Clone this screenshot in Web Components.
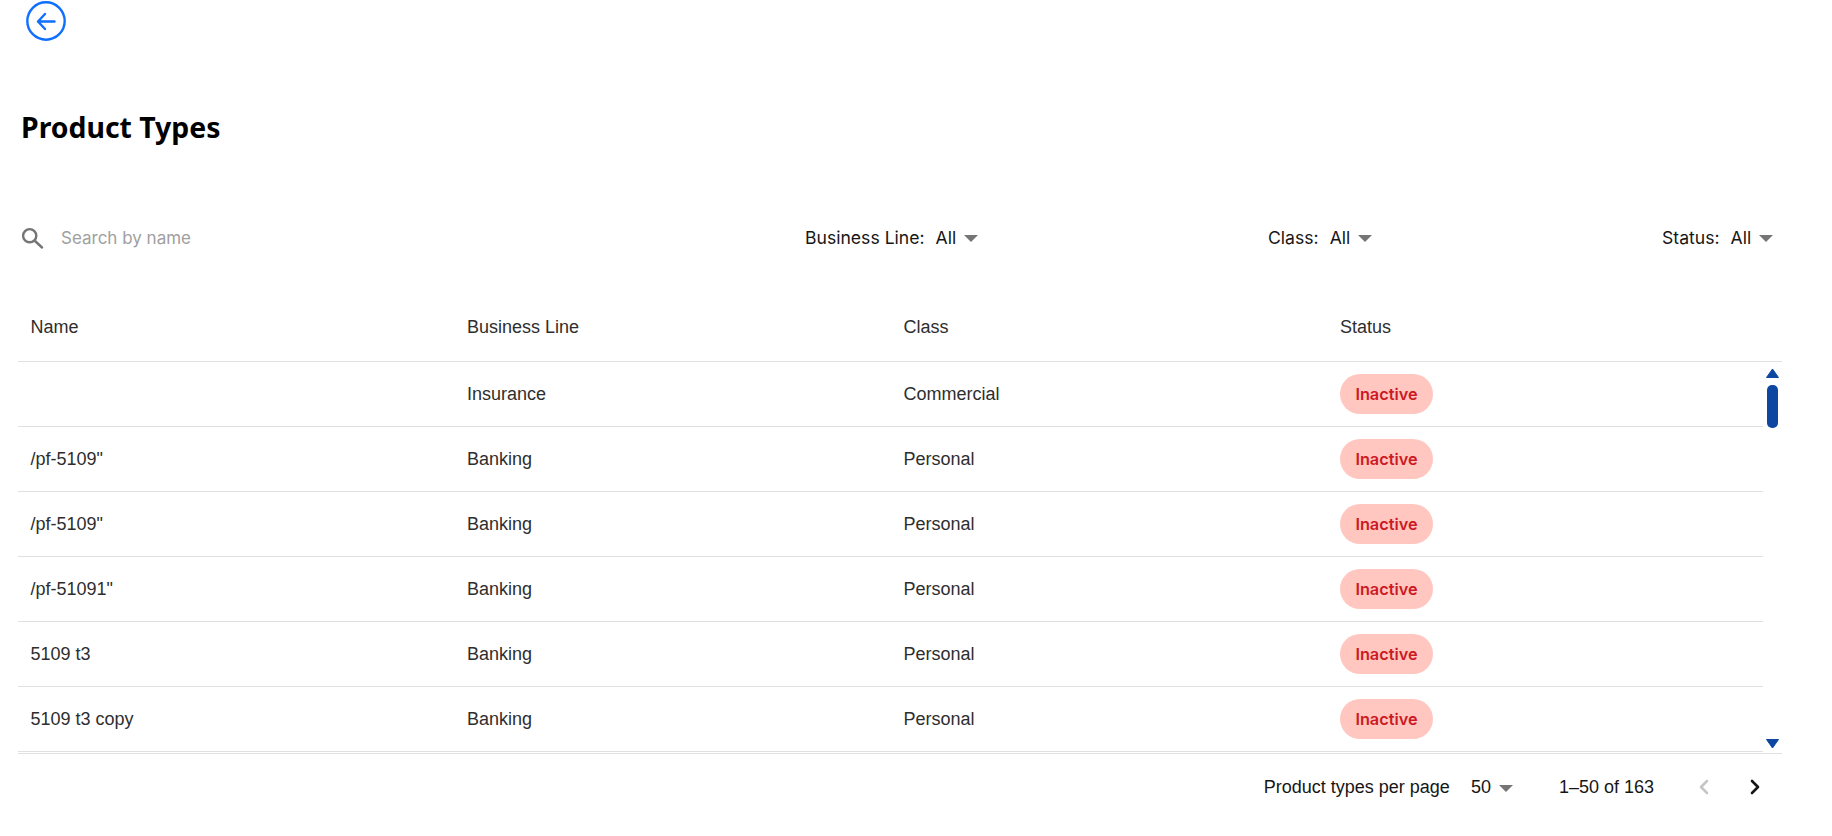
<!DOCTYPE html>
<html>
<head>
<meta charset="utf-8">
<title>Product Types</title>
<style>
  html, body { margin: 0; height: 100%; background: #fff; font-family: "Liberation Sans", sans-serif; }
  body { overflow: hidden; }
</style>
</head>
<body>
<product-types-page></product-types-page>

<script>
/* small select used by the filter bar and the pager */
const selectTemplate = document.createElement('template');
selectTemplate.innerHTML = `
  <style>
    :host { display: inline-flex; align-items: center; white-space: nowrap; }
    .label { margin-right: 11px; }
    .label:empty { display: none; }
    .caret { width: 0; height: 0; margin-left: 8px; margin-top: 2px;
      border-left: 7px solid transparent; border-right: 7px solid transparent; border-top: 7px solid #757575; }
  </style>
  <span class="label"></span><slot></slot><span class="caret"></span>
`;
class SelectBox extends HTMLElement {
  connectedCallback() {
    const root = this.attachShadow({ mode: 'open' });
    root.appendChild(selectTemplate.content.cloneNode(true));
    root.querySelector('.label').textContent = this.getAttribute('label') || '';
  }
}
customElements.define('select-box', SelectBox);

const pillTemplate = document.createElement('template');
pillTemplate.innerHTML = `
  <style>
    :host { display: inline-flex; align-items: center; justify-content: center; width: 93px; height: 40px;
      border-radius: 20px; background: #ffc7c0; color: #cc1a24; font: 600 16.3px Inter, sans-serif; box-sizing: border-box; }
  </style>
  <slot></slot>
`;
class StatusPill extends HTMLElement {
  connectedCallback() {
    this.attachShadow({ mode: 'open' }).appendChild(pillTemplate.content.cloneNode(true));
  }
}
customElements.define('status-pill', StatusPill);

const rowTemplate = document.createElement('template');
rowTemplate.innerHTML = `
  <style>
    :host { display: grid; grid-template-columns: repeat(4, 436.5px); height: 65px; box-sizing: border-box;
      border-bottom: 1px solid #e0e0e0; align-items: center; font: 18px "Liberation Sans", sans-serif; color: #2e2e2e; flex: none; }
    div { padding-left: 12.5px; white-space: nowrap; }
    .pill { display: flex; }
  </style>
  <div class="name"></div><div class="line"></div><div class="cls"></div>
  <div class="pill"><status-pill>Inactive</status-pill></div>
`;
class ProductRow extends HTMLElement {
  connectedCallback() {
    const root = this.attachShadow({ mode: 'open' });
    root.appendChild(rowTemplate.content.cloneNode(true));
    root.querySelector('.name').textContent = this.getAttribute('name') || '';
    root.querySelector('.line').textContent = this.getAttribute('line') || '';
    root.querySelector('.cls').textContent = this.getAttribute('cls') || '';
  }
}
customElements.define('product-row', ProductRow);

const scrollTemplate = document.createElement('template');
scrollTemplate.innerHTML = `
  <style>
    :host { display: flex; flex-direction: column; align-items: center; width: 19px; flex: none; height: 391px; }
    svg { display: block; flex: none; }
    .up { margin-top: 6px; }
    .thumb { width: 11px; height: 43px; margin-top: 7px; border-radius: 5px; background: #0d47a1; }
    .gap { flex: 1; }
    .down { margin-bottom: 4px; }
  </style>
  <svg class="up" width="13" height="10" viewBox="0 0 13 10"><path d="M6.5 1 L12.5 9.5 H.5 Z" fill="#0d47a1" stroke="#0d47a1" stroke-linejoin="round"/></svg>
  <div class="thumb"></div>
  <div class="gap"></div>
  <svg class="down" width="13" height="10" viewBox="0 0 13 10"><path d="M.5.5 H12.5 L6.5 9 Z" fill="#0d47a1" stroke="#0d47a1" stroke-linejoin="round"/></svg>
`;
class ScrollRail extends HTMLElement {
  connectedCallback() {
    this.attachShadow({ mode: 'open' }).appendChild(scrollTemplate.content.cloneNode(true));
  }
}
customElements.define('scroll-rail', ScrollRail);

const pageTemplate = document.createElement('template');
pageTemplate.innerHTML = `
  <style>
    :host { display: block; height: 836px; box-sizing: border-box; padding: 0 50px 0 18px; width: 1832px; font: 18px "Liberation Sans", sans-serif; color: #2e2e2e; }
    .back { display: block; margin: 1px 0 0 8px; }
    h1 { margin: 67px 0 0 3px; font: 700 28.4px/38px "Noto Sans", sans-serif; color: #000; }
    .filters { display: flex; align-items: center; height: 40px; margin-top: 71px; color: #161616; }
    .filters select-box { font: 17.6px Inter, sans-serif; }
    .search { display: flex; align-items: center; width: 787px; flex: none; font: 17px Inter, sans-serif; color: #a0a0a0; }
    .search svg { margin: 0 16px 0 3px; flex: none; }
    .search span { margin-top: 2px; }
    .f2 { width: 463px; flex: none; }
    .f3 { width: 394px; flex: none; }
    .table-head { display: grid; grid-template-columns: repeat(4, 436.5px); align-items: center; height: 66px;
      margin-top: 39px; padding-bottom: 3px; width: 1764px; box-sizing: border-box; border-bottom: 1px solid #e0e0e0; }
    .table-head div { padding-left: 12.5px; }
    .table-body { display: flex; height: 391px; width: 1764px; overflow: hidden; border-bottom: 1px solid #e0e0e0; }
    .rows { display: flex; flex-direction: column; width: 1745px; flex: none; }
    .pager { display: flex; align-items: center; height: 66px; width: 1764px; padding-right: 15px; box-sizing: border-box; justify-content: flex-end; color: #161616; }
    .pager .per { margin-right: 21px; }
    .pager .range { margin-left: 46px; margin-right: 38px; }
    .pager svg { display: block; flex: none; }
  </style>
  <svg class="back" width="40" height="40" viewBox="0 0 40 40" fill="none" stroke="#0f6fff" stroke-width="2.4" stroke-linecap="round" stroke-linejoin="round">
    <circle cx="20" cy="20" r="18.7"/>
    <path d="M28.5 20.5 H12 M19 13 L12 20.5 L19 28"/>
  </svg>
  <h1>Product Types</h1>
  <div class="filters">
    <div class="search">
      <svg width="24" height="24" viewBox="0 0 24 24" fill="none" stroke="#757575" stroke-width="2.4">
        <circle cx="8.7" cy="10.7" r="6.6"/><path d="M13.5 15.5 L21 22.5" stroke-linecap="round"/>
      </svg>
      <span>Search by name</span>
    </div>
    <select-box class="f2" label="Business Line:">All</select-box>
    <select-box class="f3" label="Class:">All</select-box>
    <select-box label="Status:">All</select-box>
  </div>
  <div class="table-head"><div>Name</div><div>Business Line</div><div>Class</div><div>Status</div></div>
  <div class="table-body">
    <div class="rows">
      <product-row name="" line="Insurance" cls="Commercial"></product-row>
      <product-row name='/pf-5109"' line="Banking" cls="Personal"></product-row>
      <product-row name='/pf-5109"' line="Banking" cls="Personal"></product-row>
      <product-row name='/pf-51091"' line="Banking" cls="Personal"></product-row>
      <product-row name="5109 t3" line="Banking" cls="Personal"></product-row>
      <product-row name="5109 t3 copy" line="Banking" cls="Personal"></product-row>
    </div>
    <scroll-rail></scroll-rail>
  </div>
  <div class="pager">
    <span class="per">Product types per page</span>
    <select-box>50</select-box>
    <span class="range">1–50 of 163</span>
    <svg width="24" height="24" viewBox="0 0 24 24" fill="none" stroke="#c6c6c6" stroke-width="2.6" stroke-linecap="round" stroke-linejoin="round"><path d="M15 6 L9 12 L15 18"/></svg>
    <svg style="margin-left:27px" width="24" height="24" viewBox="0 0 24 24" fill="none" stroke="#161616" stroke-width="2.6" stroke-linecap="round" stroke-linejoin="round"><path d="M9 6 L15 12 L9 18"/></svg>
  </div>
`;
class ProductTypesPage extends HTMLElement {
  connectedCallback() {
    this.attachShadow({ mode: 'open' }).appendChild(pageTemplate.content.cloneNode(true));
  }
}
customElements.define('product-types-page', ProductTypesPage);
</script>
</body>
</html>
